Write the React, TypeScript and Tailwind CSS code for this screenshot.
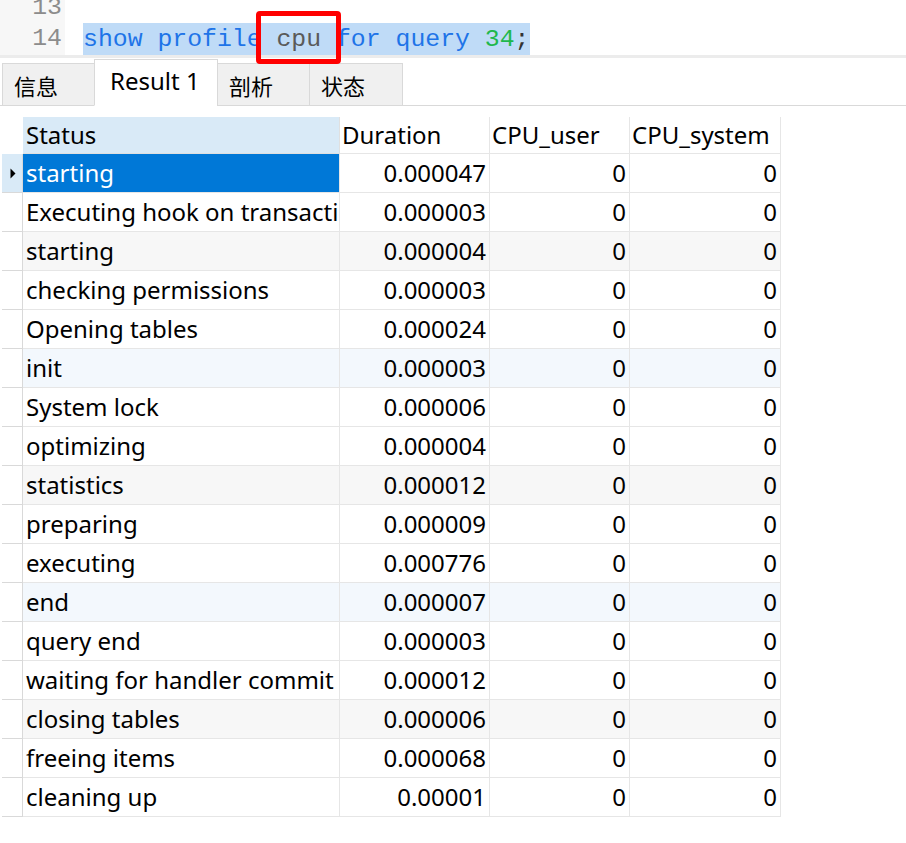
import React from "react";

type Row = { status: string; duration: string; user: string; system: string };

const ROWS: Row[] = [
  { status: "starting", duration: "0.000047", user: "0", system: "0" },
  { status: "Executing hook on transaction", duration: "0.000003", user: "0", system: "0" },
  { status: "starting", duration: "0.000004", user: "0", system: "0" },
  { status: "checking permissions", duration: "0.000003", user: "0", system: "0" },
  { status: "Opening tables", duration: "0.000024", user: "0", system: "0" },
  { status: "init", duration: "0.000003", user: "0", system: "0" },
  { status: "System lock", duration: "0.000006", user: "0", system: "0" },
  { status: "optimizing", duration: "0.000004", user: "0", system: "0" },
  { status: "statistics", duration: "0.000012", user: "0", system: "0" },
  { status: "preparing", duration: "0.000009", user: "0", system: "0" },
  { status: "executing", duration: "0.000776", user: "0", system: "0" },
  { status: "end", duration: "0.000007", user: "0", system: "0" },
  { status: "query end", duration: "0.000003", user: "0", system: "0" },
  { status: "waiting for handler commit", duration: "0.000012", user: "0", system: "0" },
  { status: "closing tables", duration: "0.000006", user: "0", system: "0" },
  { status: "freeing items", duration: "0.000068", user: "0", system: "0" },
  { status: "cleaning up", duration: "0.00001", user: "0", system: "0" },
];

const TABS = ["信息", "Result 1", "剖析", "状态"];
const TAB_WIDTHS = ["w-[93px]", "w-[124px]", "w-[93px]", "w-[94px]"];

function rowBg(index: number) {
  // every third row is tinted, alternating grey / pale blue
  if (index % 3 !== 2) return "bg-white";
  return (index + 1) % 6 === 0 ? "bg-[#f3f8fd]" : "bg-[#f7f7f7]";
}

function Editor() {
  return (
    <div className="relative h-[55px] overflow-hidden bg-white">
      <div className="-mt-[8px] flex font-['Liberation_Mono','DejaVu_Sans_Mono',monospace] text-[24.8px] leading-[31px]">
        <div className="w-[65px] shrink-0 bg-[#f7f7f7] pr-[3px] text-right text-[#8c8c8c]">
          <div>13</div>
          <div>14</div>
        </div>
        <div className="pl-[18px]">
          <div>&nbsp;</div>
          <div className="inline-block bg-[#bfdbf7] pr-[1px] pt-[1px]">
            <span className="text-[#1e74e8]">show profile </span>
            <span className="text-[#5a5a5a]">cpu</span>
            <span className="text-[#1e74e8]"> for query </span>
            <span className="text-[#1fb84c]">34</span>
            <span className="text-[#333]">;</span>
          </div>
        </div>
      </div>
    </div>
  );
}

function Tabs() {
  return (
    <div className="flex h-[48px] items-end border-b border-[#d9d9d9] bg-white pl-[2px] text-black">
      {TABS.map((tab, i) => {
        const active = i === 1;
        return (
          <div
            key={tab}
            className={[
              "-mb-px flex items-center border border-[#d9d9d9]",
              TAB_WIDTHS[i],
              active
                ? "h-[47px] border-b-white bg-white pb-[4px] pl-[15px] font-['Noto_Sans',sans-serif] text-[24px]"
                : "h-[43px] bg-[#f0f0f0] pl-[11px] pt-[2px] font-['Noto_Sans_CJK_SC',sans-serif] text-[22px]",
              i > 0 ? "-ml-px" : "",
            ].join(" ")}
          >
            {tab}
          </div>
        );
      })}
    </div>
  );
}

function ResultGrid() {
  const cell = "flex h-[39px] items-center overflow-hidden whitespace-nowrap border-b border-r border-[#e6e6e6]";
  return (
    <div className="ml-[2px] mt-[11px] w-[780px] font-['Noto_Sans',sans-serif] text-[24px] text-black">
      <div className="flex h-[37px]">
        <div className="w-[21px] shrink-0" />
        <div className="flex w-[317px] items-center overflow-hidden border-b border-r border-[#e0e0e0] bg-[#d9eaf7] pl-[3px]">Status</div>
        <div className="flex w-[150px] items-center overflow-hidden border-b border-r border-[#e6e6e6] pl-[2px]">Duration</div>
        <div className="flex w-[140px] items-center overflow-hidden border-b border-r border-[#e6e6e6] pl-[2px]">CPU_user</div>
        <div className="flex w-[151px] items-center overflow-hidden whitespace-nowrap border-b border-r border-[#e6e6e6] pl-[2px]">CPU_system</div>
      </div>
      {ROWS.map((row, i) => {
        const selected = i === 0;
        const bg = rowBg(i);
        return (
          <div key={i} className="flex">
            <div
              className={[
                "flex h-[39px] w-[21px] shrink-0 items-center justify-end border-b border-r border-[#d9d9d9] pr-[6px]",
                selected ? "bg-[#d9eaf7]" : "bg-white",
              ].join(" ")}
            >
              {selected && (
                <svg width="6" height="11" viewBox="0 0 6 11">
                  <path d="M0.5 0.5 L5.5 5.5 L0.5 10.5 Z" fill="#000" />
                </svg>
              )}
            </div>
            <div
              className={[
                cell,
                "w-[317px] pl-[3px]",
                selected ? "bg-[#0078d7] text-white" : bg,
              ].join(" ")}
            >
              {row.status}
            </div>
            <div className={[cell, "w-[150px] justify-end pr-[3px]", bg].join(" ")}>{row.duration}</div>
            <div className={[cell, "w-[140px] justify-end pr-[3px]", bg].join(" ")}>{row.user}</div>
            <div className={[cell, "w-[151px] justify-end pr-[3px]", bg].join(" ")}>{row.system}</div>
          </div>
        );
      })}
    </div>
  );
}

export default function App() {
  return (
    <div className="relative h-[843px] w-[906px] overflow-hidden bg-white">
      <Editor />
      <div className="h-[3px] bg-[#ececec]" />
      <Tabs />
      <ResultGrid />
      <div className="pointer-events-none absolute left-[256px] top-[11px] h-[53px] w-[85px] rounded-[4px] border-[5px] border-[#ff0000]" />
    </div>
  );
}
